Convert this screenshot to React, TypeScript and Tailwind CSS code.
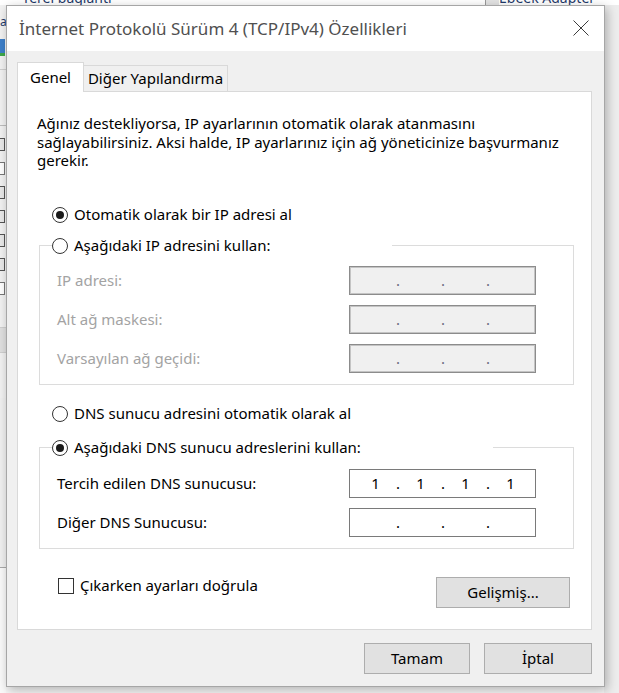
import React from "react";

function Radio({ checked }: { checked?: boolean }) {
  return (
    <span className="w-[16px] h-[16px] rounded-full border border-[#333333] bg-white flex items-center justify-center shrink-0">
      {checked ? <span className="w-[8px] h-[8px] rounded-full bg-[#1a1a1a]" /> : null}
    </span>
  );
}

function RadioRow({ checked, label }: { checked?: boolean; label: string }) {
  return (
    <div className="flex items-center h-[20px] gap-[6px]">
      <Radio checked={checked} />
      <span className="whitespace-nowrap text-black">{label}</span>
    </div>
  );
}

function IpField({ values, disabled }: { values?: string[]; disabled?: boolean }) {
  const segs = values ?? ["", "", "", ""];
  return (
    <div
      className={
        disabled
          ? "w-[187px] h-[29px] flex items-center pl-[3px] bg-[#f0f0f0] border border-[#8c8c8c] shadow-[inset_0_0_0_1px_#c4c4c4] text-[#6b6b80]"
          : "w-[187px] h-[29px] flex items-center pl-[3px] bg-white border border-[#7a7a7a] text-black"
      }
    >
      {segs.map((v, i) => (
        <React.Fragment key={i}>
          {i > 0 ? (
            <span className="w-0 flex justify-center">
              <span>.</span>
            </span>
          ) : null}
          <span className="w-[45px] text-center">{v}</span>
        </React.Fragment>
      ))}
    </div>
  );
}

function FieldRow({ label, disabled, values }: { label: string; disabled?: boolean; values?: string[] }) {
  return (
    <div className="flex items-center justify-between">
      <span className={disabled ? "text-[#a3a3a3] whitespace-nowrap" : "text-black whitespace-nowrap"}>{label}</span>
      <IpField disabled={disabled} values={values} />
    </div>
  );
}

function Btn({ label, w }: { label: string; w: string }) {
  return (
    <div className={`${w} h-[31px] bg-[#e1e1e1] border border-[#adadad] flex items-center justify-center text-black`}>
      {label}
    </div>
  );
}

export default function App() {
  return (
    <div className="relative w-[619px] h-[693px] overflow-hidden font-['Noto_Sans',sans-serif] text-[15px]">
      {/* background window */}
      <div className="w-[619px] h-[693px] bg-[#f7f7f7] flex flex-col">
        <div className="h-[5px] flex overflow-hidden bg-white">
          <div className="w-[485px] pl-[22px] text-[#1f3a6a] leading-[14px] -mt-[9px] whitespace-nowrap text-[14px]">Yerel bağlantı</div>
          <div className="w-[14px] bg-[#e3e3e3] border-l border-[#9a9a9a]" />
          <div className="flex-1 bg-white text-[#1f3a6a] leading-[14px] -mt-[9px] whitespace-nowrap text-[14px]">Ebeek Adapter</div>
        </div>
        <div className="flex flex-1">
          <div className="w-[6px] bg-[#f2f2f2] flex flex-col">
            <div className="h-[10px]" />
            <div className="h-[14px] text-[12px] leading-[14px] text-[#1f3a6a]">a</div>
            <div className="h-[10px]" />
            <div className="h-[14px] w-[5px] bg-[#3d7fc9]" />
            <div className="h-[3px] w-[5px] bg-[#3fa84a]" />
            <div className="h-[14px] border-b border-[#cfcfcf]" />
            <div className="h-[56px] border-b border-[#bdbdbd]" />
            <div className="h-[12px]" />
            {[1, 0, 1, 1, 1, 1, 0].map((c, i) => (
              <div key={i} className="h-[24px] flex flex-col">
                <div className={c ? "h-[13px] w-[5px] border border-l-0 border-[#555] bg-[#e9e9e9]" : "h-[13px] w-[5px] border border-l-0 border-[#777] bg-white"} />
              </div>
            ))}
            <div className="h-[22px] border-b border-[#cfcfcf]" />
            <div className="h-[25px] bg-[#e0e0e0] border-b border-[#cfcfcf]" />
            <div className="h-[45px]" />
            <div className="h-[170px] border-b border-[#a9a9a9] bg-[#f0f0f0]" />
            <div className="flex-1 bg-[#fafafa]" />
          </div>
          <div className="flex-1" />
          <div className="w-[15px] bg-[#ededed]" />
        </div>
      </div>

      {/* dialog window */}
      <div className="absolute left-[6px] top-[5px] w-[599px] h-[682px] bg-[#f0f0f0] border border-[#a6a6a6] shadow-[2px_3px_10px_rgba(0,0,0,0.28)] flex flex-col">
        <div className="h-[45px] bg-white flex items-center justify-between pl-[12px] pr-[15px] shrink-0">
          <span className="text-[17px] text-[#505050] whitespace-nowrap">İnternet Protokolü Sürüm 4 (TCP/IPv4) Özellikleri</span>
          <svg width="16" height="16" viewBox="0 0 16 16" className="-mt-[2px]">
            <path d="M0.5 0.5 L15.5 15.5 M15.5 0.5 L0.5 15.5" stroke="#3c3c3c" strokeWidth="1" fill="none" />
          </svg>
        </div>
        <div className="flex-1 flex flex-col pl-[10px] pt-[11px] pb-[12px]">
          {/* tabs */}
          <div className="h-[29px] flex items-end">
            <div className="relative z-10 w-[67px] h-[30px] -mb-[1px] bg-white border border-b-0 border-[#d9d9d9] flex items-center justify-center pb-[1px] text-black">
              Genel
            </div>
            <div className="w-[144px] h-[26px] bg-[#f0f0f0] border border-l-0 border-b-0 border-[#d9d9d9] flex items-center justify-center text-black">
              Diğer Yapılandırma
            </div>
          </div>
          {/* panel */}
          <div className="w-[575px] h-[539px] bg-white border border-[#d9d9d9] flex flex-col pt-[22px]">
            <p className="pl-[19px] leading-[18.5px] text-black whitespace-nowrap">
              Ağınız destekliyorsa, IP ayarlarının otomatik olarak atanmasını
              <br />
              sağlayabilirsiniz. Aksi halde, IP ayarlarınız için ağ yöneticinize başvurmanız
              <br />
              gerekir.
            </p>
            <div className="ml-[21px] mr-[17px] flex flex-col">
              <div className="mt-[35px] pl-[13px]">
                <RadioRow checked label="Otomatik olarak bir IP adresi al" />
              </div>
              <fieldset className="mt-[11px] border border-[#dcdcdc] px-0 pb-[11px]">
                <legend className="ml-[12px] w-[340px]">
                  <RadioRow label="Aşağıdaki IP adresini kullan:" />
                </legend>
                <div className="pt-[10px] pl-[17px] pr-[37px] flex flex-col gap-[10px]">
                  <FieldRow disabled label="IP adresi:" />
                  <FieldRow disabled label="Alt ağ maskesi:" />
                  <FieldRow disabled label="Varsayılan ağ geçidi:" />
                </div>
              </fieldset>
              <div className="mt-[19px] pl-[13px]">
                <RadioRow label="DNS sunucu adresini otomatik olarak al" />
              </div>
              <fieldset className="mt-[14px] border border-[#dcdcdc] px-0 pb-[11px]">
                <legend className="ml-[12px] w-[441px]">
                  <RadioRow checked label="Aşağıdaki DNS sunucu adreslerini kullan:" />
                </legend>
                <div className="pt-[11px] pl-[17px] pr-[37px] flex flex-col gap-[10px]">
                  <FieldRow label="Tercih edilen DNS sunucusu:" values={["1", "1", "1", "1"]} />
                  <FieldRow label="Diğer DNS Sunucusu:" />
                </div>
              </fieldset>
              <div className="mt-[28px] pl-[19px] pr-[4px] flex items-start justify-between">
                <div className="flex items-center gap-[6px] h-[18px]">
                  <span className="w-[16px] h-[16px] border border-[#333333] bg-white shrink-0" />
                  <span className="text-black whitespace-nowrap">Çıkarken ayarları doğrula</span>
                </div>
                <Btn label="Gelişmiş..." w="w-[134px]" />
              </div>
            </div>
          </div>
          {/* bottom buttons */}
          <div className="mt-[13px] w-[575px] flex justify-end gap-[14px]">
            <Btn label="Tamam" w="w-[106px]" />
            <Btn label="İptal" w="w-[108px]" />
          </div>
        </div>
      </div>
    </div>
  );
}
